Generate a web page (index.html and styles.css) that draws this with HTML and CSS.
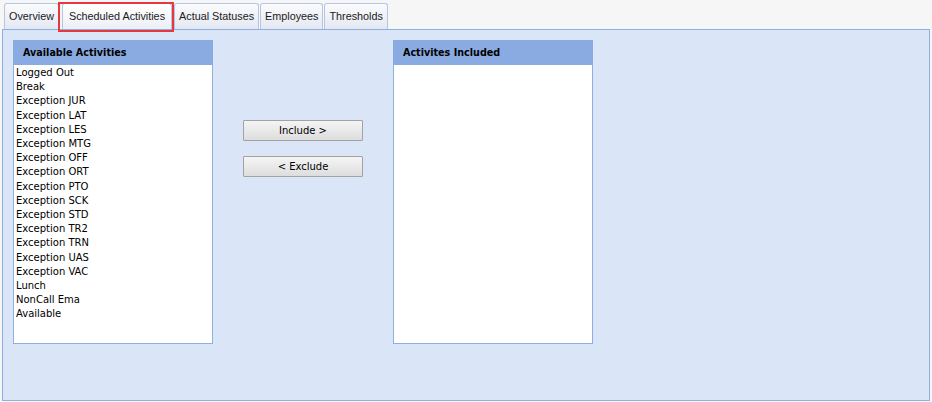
FILE: index.html
```html
<!DOCTYPE html>
<html lang="en">
<head>
  <meta charset="UTF-8">
  <title>Scheduled Activities</title>
  <link rel="stylesheet" href="styles.css">
</head>
<body>
  <div class="tabs">
    <div class="tab">Overview</div>
    <div class="tab active">Scheduled Activities</div>
    <div class="tab">Actual Statuses</div>
    <div class="tab">Employees</div>
    <div class="tab">Thresholds</div>
  </div>

  <div class="panel">
    <div class="list-box">
      <div class="list-header">Available Activities</div>
      <ul class="list-body">
        <li>Logged Out</li>
        <li>Break</li>
        <li>Exception JUR</li>
        <li>Exception LAT</li>
        <li>Exception LES</li>
        <li>Exception MTG</li>
        <li>Exception OFF</li>
        <li>Exception ORT</li>
        <li>Exception PTO</li>
        <li>Exception SCK</li>
        <li>Exception STD</li>
        <li>Exception TR2</li>
        <li>Exception TRN</li>
        <li>Exception UAS</li>
        <li>Exception VAC</li>
        <li>Lunch</li>
        <li>NonCall Ema</li>
        <li>Available</li>
      </ul>
    </div>

    <div class="move-buttons">
      <button class="btn">Include &gt;</button>
      <button class="btn">&lt; Exclude</button>
    </div>

    <div class="list-box">
      <div class="list-header">Activites Included</div>
      <ul class="list-body"></ul>
    </div>
  </div>
</body>
</html>
```

FILE: styles.css
```css
* {
  box-sizing: border-box;
}
body {
  margin: 0;
  background: #f6f6f6;
  font-family: 'DejaVu Sans', Verdana, sans-serif;
  color: #000;
}
.tabs {
  display: flex;
  align-items: flex-end;
  height: 29px;
  padding-left: 4px;
}
.tab {
  position: relative;
  height: 26px;
  padding: 0 4px;
  margin-right: 1px;
  font-family: 'Liberation Sans', Arial, sans-serif;
  font-size: 10.8px;
  line-height: 25px;
  color: #1a1a1a;
  background: linear-gradient(#fbfbfd, #e4e8f1);
  border: 1px solid #b4c6e2;
  border-bottom: none;
  border-radius: 3px 3px 0 0;
}
.tab.active {
  margin: 0 2px 0 2px;
  padding: 0 6px;
  background: linear-gradient(#ffffff, #eceff5);
}
.tab.active::after {
  content: '';
  position: absolute;
  left: -5px;
  top: -2px;
  right: -3px;
  bottom: -3px;
  border: 2px solid #e8383f;
}
.panel {
  display: flex;
  align-items: flex-start;
  height: 372px;
  margin: 0 2px;
  padding: 10px;
  background: #dae5f8;
  border: 1px solid #8eb0e0;
}
.list-box {
  width: 200px;
  height: 304px;
  display: flex;
  flex-direction: column;
  border: 1px solid #8eb0e0;
  border-top: none;
  background: #fff;
}
.list-header {
  height: 25px;
  margin: 0 -1px;
  padding-left: 10px;
  background: #8aabe2;
  font-size: 9.6px;
  font-weight: bold;
  line-height: 25px;
}
.list-body {
  flex: 1;
  margin: 0;
  padding: 1px 0 0 2px;
  list-style: none;
  font-size: 10px;
  line-height: 14.2px;
}
.move-buttons {
  display: flex;
  flex-direction: column;
  gap: 15px;
  width: 120px;
  margin: 80px 30px 0;
}
.btn {
  height: 21px;
  padding: 0;
  font-family: 'DejaVu Sans', Verdana, sans-serif;
  font-size: 10px;
  color: #000;
  background: linear-gradient(#f5f5f5, #dddddd);
  border: 1px solid #a2a2a2;
  border-radius: 1px;
}
```
